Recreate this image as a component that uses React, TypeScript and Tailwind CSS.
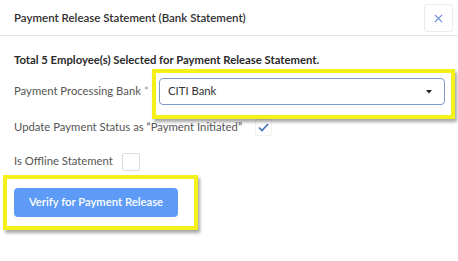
const font = { fontFamily: 'Lato, "Open Sans", sans-serif' };

const Highlight = ({ className }: { className: string }) => (
  <div
    className={`absolute pointer-events-none border-[4px] border-[#f4f019] shadow-[2px_3px_3px_rgba(0,0,0,0.35)] ${className}`}
  />
);

export default function App() {
  return (
    <div className="relative w-[458px] h-[261px] bg-white text-[#333]" style={font}>
      <div className="flex items-center justify-between h-[36px] border-b border-[#e6e6e6] pl-[14px] pr-[5px]">
        <span className="text-[11.5px] font-semibold text-[#2f2f2f]">Payment Release Statement (Bank Statement)</span>
        <button className="w-[29px] h-[28px] mt-[1px] flex items-center justify-center rounded-[3px] border border-[#ececec]">
          <svg width="9" height="9" viewBox="0 0 10 10" fill="none" stroke="#6c8ee0" strokeWidth="1.4">
            <path d="M1 1 L9 9 M9 1 L1 9" />
          </svg>
        </button>
      </div>

      <div className="flex flex-col pl-[14px]">
        <div className="mt-[16px] text-[11.3px] font-bold leading-[16px] text-[#2a2a2a]">
          Total 5 Employee(s) Selected for Payment Release Statement.
        </div>

        <div className="flex items-center mt-[10px]">
          <span className="w-[145px] text-[11.3px] text-[#555]">
            Payment Processing Bank <span className="text-[#999]">*</span>
          </span>
          <div className="flex items-center justify-between w-[286px] h-[27px] rounded-[4px] border border-[#7b9cc8] pl-[8px] pr-[12px]">
            <span className="text-[11.3px] text-[#333]">CITI Bank</span>
            <svg width="6" height="4" viewBox="0 0 6 4">
              <path d="M0 0 L6 0 L3 3.5 Z" fill="#222" />
            </svg>
          </div>
        </div>

        <div className="flex items-center mt-[13px] h-[18px]">
          <span className="text-[11.3px] text-[#555]">Update Payment Status as “Payment Initiated”</span>
          <div className="ml-[13px] w-[17px] h-[17px] rounded-[2px] border border-[#f1f1f1] flex items-center justify-center">
            <svg width="11" height="9" viewBox="0 0 11 9" fill="none" stroke="#3f6fb5" strokeWidth="1.6">
              <path d="M1 4.5 L4 7.5 L10 1" />
            </svg>
          </div>
        </div>

        <div className="flex items-center mt-[16px] h-[19px]">
          <span className="text-[11.3px] text-[#555]">Is Offline Statement</span>
          <div className="ml-[9px] w-[18px] h-[18px] rounded-[2px] border border-[#dcdcdc]" />
        </div>

        <button className="mt-[17px] w-[164px] h-[29px] rounded-[4px] bg-[#5e9bf7] text-white text-[11.3px] font-semibold">
          Verify for Payment Release
        </button>
      </div>

      <Highlight className="left-[152px] top-[69px] w-[303px] h-[50px]" />
      <Highlight className="left-[3px] top-[175px] w-[195px] h-[55px]" />
    </div>
  );
}
